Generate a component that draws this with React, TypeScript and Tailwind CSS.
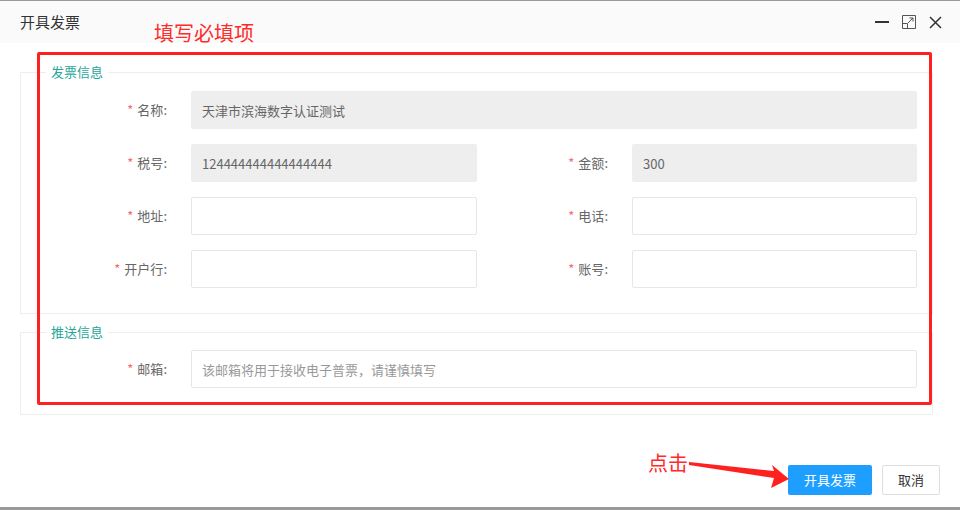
import React from "react";

const font = { fontFamily: '"Noto Sans CJK SC", "Liberation Sans", sans-serif' };

function Label({ text, className = "" }: { text: string; className?: string }) {
  return (
    <div className={"flex items-center justify-end pr-[24px] text-[13px] text-[#666] " + className}>
      <span className="mr-[4px] text-[#f56c6c]">*</span>
      {text}:
    </div>
  );
}

function Field({ value, placeholder, disabled }: { value?: string; placeholder?: string; disabled?: boolean }) {
  return (
    <input
      readOnly
      defaultValue={value}
      placeholder={placeholder}
      className={
        "h-[38px] w-full rounded-[2px] border px-[10px] text-[13px] text-[#666] outline-none placeholder:text-[#999] " +
        (disabled ? "border-[#eeeeee] bg-[#eeeeee]" : "border-[#e6e6e6] bg-white")
      }
    />
  );
}

export default function App() {
  return (
    <div className="relative flex h-[510px] w-[960px] flex-col overflow-hidden bg-white" style={font}>
      <div className="h-px bg-[#9a9a9a]" />
      <div className="flex h-[42px] items-center justify-between bg-[#fafafa] pl-[20px] pr-[18px]">
        <span className="text-[15px] text-[#333]">开具发票</span>
        <div className="flex items-center gap-[13px] text-[#333]">
          <svg width="14" height="14" viewBox="0 0 14 14">
            <path d="M0 7h14" stroke="#333" strokeWidth="2" />
          </svg>
          <svg width="14" height="14" viewBox="0 0 14 14" fill="none" stroke="#555" strokeWidth="1">
            <path d="M0.5 0.5h13v13h-13z" />
            <path d="M0.5 8.5h5v5" />
            <path d="M6 8L11 3M7.5 3H11V6.5" />
          </svg>
          <svg width="13" height="13" viewBox="0 0 13 13" stroke="#333" strokeWidth="1.5">
            <path d="M1 1L12 12M12 1L1 12" />
          </svg>
        </div>
      </div>

      <div className="pt-[19px]">
        <fieldset className="ml-[20px] w-[913px] border border-[#eeeeee] px-0 pb-[25px] pt-[9px]">
          <legend className="ml-[25px] px-[5px] text-[13px] leading-[20px] text-[#26a69a]">发票信息</legend>
          <div className="flex flex-col gap-[15px] pr-[15px]">
            <div className="grid grid-cols-[170px_1fr]">
              <Label text="名称" />
              <Field value="天津市滨海数字认证测试" disabled />
            </div>
            <div className="grid grid-cols-[170px_286px_155px_1fr]">
              <Label text="税号" />
              <Field value="124444444444444444" disabled />
              <Label text="金额" />
              <Field value="300" disabled />
            </div>
            <div className="grid grid-cols-[170px_286px_155px_1fr]">
              <Label text="地址" />
              <Field />
              <Label text="电话" />
              <Field />
            </div>
            <div className="grid grid-cols-[170px_286px_155px_1fr]">
              <Label text="开户行" />
              <Field />
              <Label text="账号" />
              <Field />
            </div>
          </div>
        </fieldset>

        <fieldset className="ml-[20px] mt-[8px] w-[913px] border border-[#eeeeee] px-0 pb-[26px] pt-[8px]">
          <legend className="ml-[25px] px-[5px] text-[13px] leading-[20px] text-[#26a69a]">推送信息</legend>
          <div className="grid grid-cols-[170px_1fr] pr-[15px]">
            <Label text="邮箱" />
            <Field placeholder="该邮箱将用于接收电子普票，请谨慎填写" />
          </div>
        </fieldset>
      </div>

      <div className="mt-[50px] flex justify-end gap-[10px] pr-[20px]">
        <button className="h-[30px] w-[84px] rounded-[2px] bg-[#1e9fff] text-[13px] text-white">开具发票</button>
        <button className="h-[30px] w-[58px] rounded-[2px] border border-[#dedede] bg-white text-[13px] text-[#333]">取消</button>
      </div>

      <div className="mt-auto h-[3px] bg-[#999]" />

      {/* annotations drawn over the dialog */}
      <div className="absolute left-[154px] top-[19px] text-[20px] leading-[28px] text-[#ff2a2a]">填写必填项</div>
      <div className="absolute left-[37px] top-[52px] h-[353px] w-[895px] rounded-[2px] border-[3px] border-[#ff2020]" />
      <div className="absolute left-[648px] top-[449px] text-[20px] leading-[28px] text-[#ff2a2a]">点击</div>
      <svg className="absolute left-0 top-0" width="960" height="510" viewBox="0 0 960 510">
        <polygon
          points="689,462 774,471 772,465 789,479 771,488 774,478 689,465"
          fill="#ff2020"
        />
      </svg>
    </div>
  );
}
